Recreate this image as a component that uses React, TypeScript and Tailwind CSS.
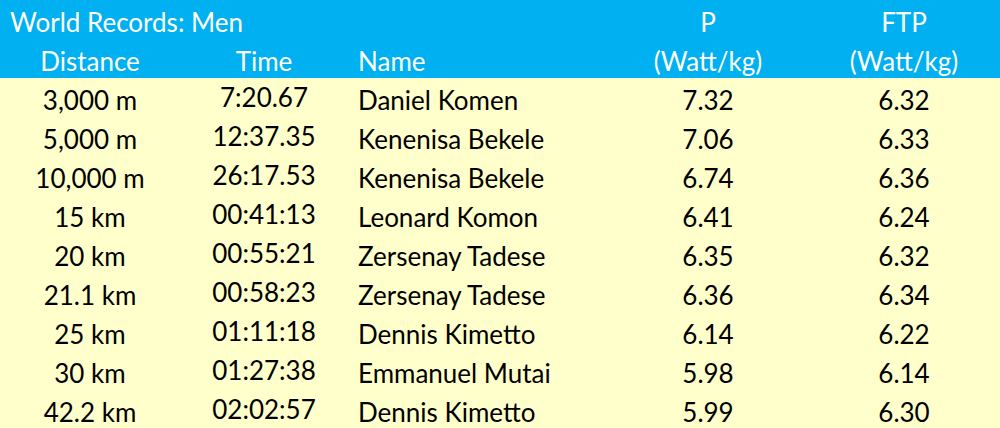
const rows = [
  ["3,000 m", "7:20.67", "Daniel Komen", "7.32", "6.32"],
  ["5,000 m", "12:37.35", "Kenenisa Bekele", "7.06", "6.33"],
  ["10,000 m", "26:17.53", "Kenenisa Bekele", "6.74", "6.36"],
  ["15 km", "00:41:13", "Leonard Komon", "6.41", "6.24"],
  ["20 km", "00:55:21", "Zersenay Tadese", "6.35", "6.32"],
  ["21.1 km", "00:58:23", "Zersenay Tadese", "6.36", "6.34"],
  ["25 km", "01:11:18", "Dennis Kimetto", "6.14", "6.22"],
  ["30 km", "01:27:38", "Emmanuel Mutai", "5.98", "6.14"],
  ["42.2 km", "02:02:57", "Dennis Kimetto", "5.99", "6.30"],
];

export default function App() {
  return (
    <div className="w-[1000px] h-[428px] overflow-hidden bg-[#ffffcc] font-['Lato','Liberation_Sans',sans-serif] text-[26px] leading-none">
      {/* Header */}
      <div className="bg-[#00b0f0] text-white">
        <div className="grid grid-cols-[180px_168px_260px_200px_192px] h-[39px] pt-[4px] items-center">
          <div className="col-span-3 pl-[10px] whitespace-nowrap">World Records: Men</div>
          <div className="text-center">P</div>
          <div className="text-center">FTP</div>
        </div>
        <div className="grid grid-cols-[180px_168px_260px_200px_192px] h-[39px] pt-[4px] items-center">
          <div className="text-center">Distance</div>
          <div className="text-center">Time</div>
          <div className="pl-[10px]">Name</div>
          <div className="text-center">(Watt/kg)</div>
          <div className="text-center">(Watt/kg)</div>
        </div>
      </div>

      {/* Rows */}
      {rows.map((r) => (
        <div
          key={r[0]}
          className="grid grid-cols-[180px_168px_260px_200px_192px] h-[39px] pt-[4px] items-center text-black"
        >
          <div className="text-center">{r[0]}</div>
          <div className="text-center -mt-[6px]">{r[1]}</div>
          <div className="pl-[10px] whitespace-nowrap">{r[2]}</div>
          <div className="text-center">{r[3]}</div>
          <div className="text-center">{r[4]}</div>
        </div>
      ))}
    </div>
  );
}
